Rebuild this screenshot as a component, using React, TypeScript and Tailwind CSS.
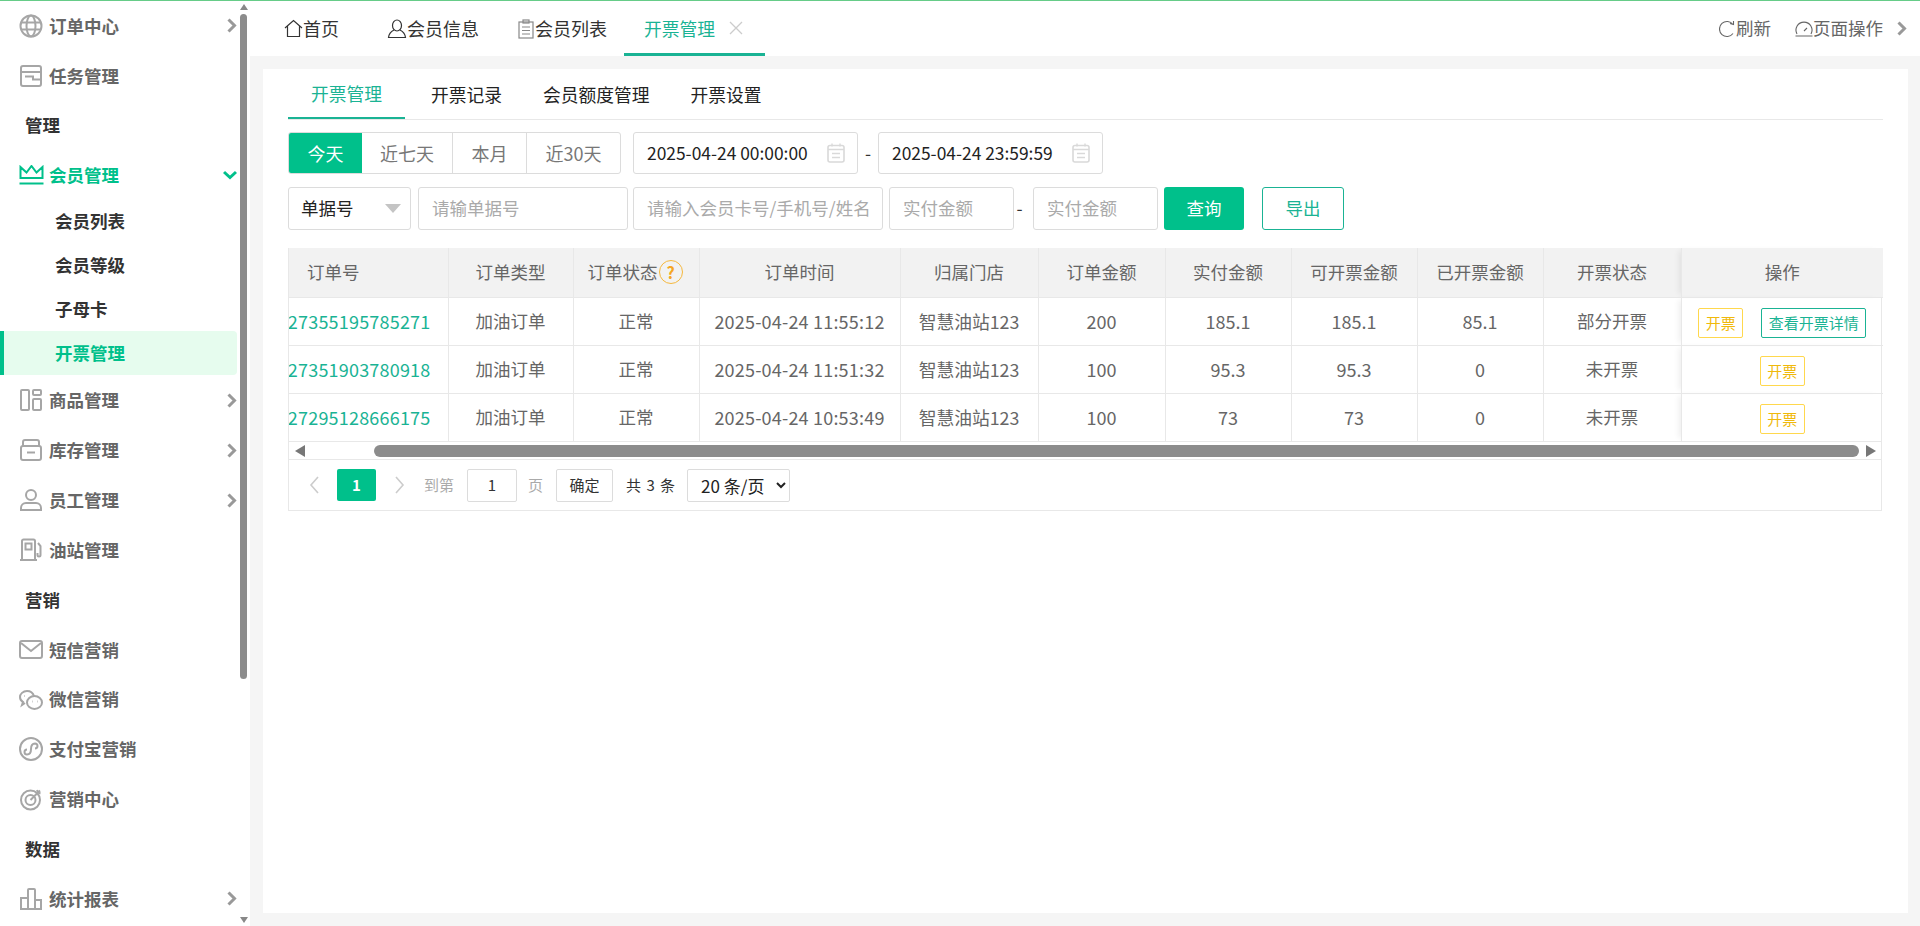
// App.tsx
import type { ReactNode } from 'react';

const ICON_GRAY = '#a6a6a6';

const Chevron = () => (
  <svg width="10" height="15" viewBox="0 0 10 15" fill="none" stroke="#999" strokeWidth="3">
    <path d="M1.500 1.500 7.500 7.500 1.500 13.500" />
  </svg>
);

const sideIcons: Record<string, ReactNode> = {
  globe: (
    <>
      <circle cx="12" cy="12" r="10.500" />
      <ellipse cx="12" cy="12" rx="4.500" ry="10.500" />
      <path d="M2 8.500h20M2 15.500h20" />
    </>
  ),
  task: (
    <>
      <rect x="2" y="2" width="20" height="20" rx="2" />
      <path d="M2 8h20M6 12.500h8v3h8" />
    </>
  ),
  goods: (
    <>
      <rect x="2" y="2" width="8" height="20" rx="1" />
      <rect x="14" y="2" width="8" height="5" rx="1" />
      <rect x="14" y="11" width="8" height="11" rx="1" />
    </>
  ),
  box: (
    <>
      <path d="M4 8V4a2 2 0 0 1 2-2h12a2 2 0 0 1 2 2v4" />
      <rect x="2" y="8" width="20" height="14" rx="2" />
      <path d="M8 14.500h8" />
    </>
  ),
  user: (
    <>
      <circle cx="12" cy="7" r="5" />
      <path d="M2 22v-2a5 5 0 0 1 5-5h10a5 5 0 0 1 5 5v2z" />
    </>
  ),
  station: (
    <>
      <path d="M3 22V3a1.500 1.500 0 0 1 1.500-1.500h10A1.500 1.500 0 0 1 16 3v19M1 22h17" />
      <rect x="6.500" y="5.500" width="6" height="6" />
      <path d="M19 5l2.500 3v9a1.500 1.500 0 0 1-3 0v-2" />
    </>
  ),
  mail: (
    <>
      <rect x="1" y="3" width="22" height="17" rx="2" />
      <path d="M2 5l10 8 10-8" />
    </>
  ),
  wechat: (
    <>
      <path d="M15 8c-1-3-4-5-7-5-4 0-7 3-7 6 0 2 1 4 3 5l-1 3 3-2" />
      <ellipse cx="15.500" cy="14.500" rx="7.500" ry="6.500" />
      <path d="M13 13.500h.5M18 13.500h.5M5.500 8h.5" />
    </>
  ),
  alipay: (
    <>
      <circle cx="12" cy="12" r="11" />
      <path d="M16 6.500c-3 0-4 2-4 5.500s-1 5.500-4 5.500a2.500 2.500 0 0 1 0-5M16 6.500a2.500 2.500 0 0 1 0 5" />
    </>
  ),
  target: (
    <>
      <circle cx="11.500" cy="13" r="9.500" />
      <circle cx="11.500" cy="13" r="5" />
      <path d="M11.500 13 21 3.500M18 3l1 2.500 2.500 1" />
    </>
  ),
  chart: (
    <>
      <rect x="2" y="11" width="7" height="11" />
      <rect x="9" y="2" width="7" height="20" rx="1" />
      <rect x="16" y="13" width="6" height="9" />
    </>
  ),
};

const SideItem = ({ icon, label, arrow }: { icon: string; label: string; arrow?: boolean }) => (
  <div className="flex h-[49.85px] items-center pl-[19px] pr-[3px] text-[17.5px] font-bold text-[#666]">
    <svg width="24" height="24" viewBox="0 0 24 24" fill="none" stroke={ICON_GRAY} strokeWidth="2" className="shrink-0">
      {sideIcons[icon]}
    </svg>
    <span className="ml-[6px] flex-1">{label}</span>
    {arrow && <Chevron />}
  </div>
);

const SideHeading = ({ label }: { label: string }) => (
  <div className="flex h-[49.85px] items-center pl-[25px] text-[17.5px] font-bold text-[#333]">{label}</div>
);

const Sidebar = () => (
  <aside className="flex w-[250px] shrink-0 bg-white">
    <div className="w-[240px] shrink-0 overflow-hidden">
      <SideItem icon="globe" label="订单中心" arrow />
      <SideItem icon="task" label="任务管理" />
      <SideHeading label="管理" />
      <div className="flex h-[49.85px] items-center pl-[19px] pr-[3px] text-[17.5px] font-bold text-[#00c08b]">
        <svg width="25" height="20" viewBox="0 0 25 20" fill="none" stroke="#00c08b" strokeWidth="2" className="shrink-0">
          <path d="M1.500 2v11h22V2l-6 5.500L12.500 1 7.500 7.500z" />
          <path d="M0.500 18.500h24" />
        </svg>
        <span className="ml-[5px] flex-1">会员管理</span>
        <svg width="14" height="10" viewBox="0 0 14 10" fill="none" stroke="#00c08b" strokeWidth="3">
          <path d="M1 2l6 5.500L13 2" />
        </svg>
      </div>
      <div className="-mt-[1px] text-[17.5px] font-bold text-[#333]">
        <div className="flex h-[43.8px] items-center pl-[55px]">会员列表</div>
        <div className="flex h-[43.8px] items-center pl-[55px]">会员等级</div>
        <div className="flex h-[43.8px] items-center pl-[55px]">子母卡</div>
        <div className="flex h-[43.8px] w-[237px] items-center rounded-r-[4px] border-l-4 border-[#00c08b] bg-[#e6fcee] pl-[51px] text-[#00c08b]">
          开票管理
        </div>
      </div>
      <div className="h-[1px]" />
      <SideItem icon="goods" label="商品管理" arrow />
      <SideItem icon="box" label="库存管理" arrow />
      <SideItem icon="user" label="员工管理" arrow />
      <SideItem icon="station" label="油站管理" />
      <SideHeading label="营销" />
      <SideItem icon="mail" label="短信营销" />
      <SideItem icon="wechat" label="微信营销" />
      <SideItem icon="alipay" label="支付宝营销" />
      <SideItem icon="target" label="营销中心" />
      <SideHeading label="数据" />
      <SideItem icon="chart" label="统计报表" arrow />
    </div>
    <div className="flex w-[7px] shrink-0 flex-col items-center justify-between py-[3px]">
      <svg width="8" height="6" viewBox="0 0 8 6" fill="#888"><path d="M4 0l4 6H0z" /></svg>
      <div className="mb-auto mt-[4px] h-[665px] w-[7px] rounded-full bg-[#8c8c8c]" />
      <svg width="8" height="6" viewBox="0 0 8 6" fill="#888"><path d="M4 6l4-6H0z" /></svg>
    </div>
  </aside>
);

const TopTab = ({ icon, label }: { icon: ReactNode; label: string }) => (
  <div className="flex items-center text-[18px] text-[#333]">
    {icon}
    <span>{label}</span>
  </div>
);

const TopBar = () => (
  <header className="flex h-[55px] shrink-0 items-center bg-white pl-[34px] pr-[13px]">
    <TopTab
      label="首页"
      icon={
        <svg width="19" height="19" viewBox="0 0 19 19" fill="none" stroke="#333" strokeWidth="1.200">
          <path d="M1 9 9.500 1.500 18 9M3.500 7v10.500h12V7" />
        </svg>
      }
    />
    <div className="ml-[48px]">
      <TopTab
        label="会员信息"
        icon={
          <svg width="20" height="20" viewBox="0 0 20 20" fill="none" stroke="#333" strokeWidth="1.200">
            <ellipse cx="10" cy="6.500" rx="4.500" ry="5.500" />
            <path d="M7 11c-2 1-5 3-5.500 7.500h17C18 14 15 12 13 11" />
          </svg>
        }
      />
    </div>
    <div className="ml-[38px]">
      <TopTab
        label="会员列表"
        icon={
          <svg width="18" height="20" viewBox="0 0 18 20" fill="none" stroke="#888" strokeWidth="1.200">
            <rect x="2" y="3" width="14" height="16" />
            <rect x="6" y="1" width="6" height="3" />
            <path d="M5 8h8M5 11.500h8M5 15h8" />
          </svg>
        }
      />
    </div>
    <div className="ml-[17px] flex h-[55px] w-[141px] items-center border-b-[3px] border-[#1ab394] pl-[20px] pt-[2px] text-[17.75px] text-[#1ab394]">
      <span>开票管理</span>
      <svg width="14" height="14" viewBox="0 0 14 14" fill="none" stroke="#ccc" strokeWidth="1.300" className="ml-[14px]">
        <path d="M1 1l12 12M13 1 1 13" />
      </svg>
    </div>
    <div className="ml-auto flex items-center text-[17.5px] text-[#666]">
      <svg width="17" height="18" viewBox="0 0 17 18" fill="none" stroke="#666" strokeWidth="1.100">
        <path d="M14 4.500A7.500 7.500 0 1 0 14 13.500M11 3.500l3.500 1V1" />
      </svg>
      <span>刷新</span>
      <svg width="18" height="16" viewBox="0 0 18 16" fill="none" stroke="#666" strokeWidth="1.100" className="ml-[24px]">
        <path d="M2 13a8 8 0 1 1 14 0M0.500 15h17M9 10l3-3" />
      </svg>
      <span>页面操作</span>
      <span className="ml-[14px]"><Chevron /></span>
    </div>
  </header>
);

const CalendarIcon = () => (
  <svg width="18" height="20" viewBox="0 0 18 20" fill="none" stroke="#d9d9d9" strokeWidth="1.600" className="ml-auto">
    <rect x="1" y="2.500" width="16" height="16.500" rx="2" />
    <path d="M1 6.500h16M5 0.500v3M13 0.500v3M5 10.500h8M5 14.500h8" strokeWidth="1.400" />
  </svg>
);

const Field = ({ width, text }: { width: string; text: string }) => (
  <div className={`flex h-[43px] shrink-0 items-center whitespace-nowrap rounded-[3px] border border-[#dcdcdc] pl-[13px] text-[#aaa] ${width}`}>
    {text}
  </div>
);

const DateField = ({ value }: { value: string }) => (
  <div className="flex h-[42px] w-[225px] items-center rounded-[3px] border border-[#dcdcdc] pl-[13px] pr-[12px] text-[17.4px] text-[#222]">
    <span>{value}</span>
    <CalendarIcon />
  </div>
);

const Filters = () => (
  <>
    <div className="mt-[12px] flex items-center text-[17.5px]">
      <div className="flex h-[42px] w-[333px] overflow-hidden rounded-[3px] border border-[#dcdcdc] text-[18px] text-[#777]">
        <div className="flex w-[73px] items-center justify-center bg-[#00c08b] text-white">今天</div>
        <div className="flex w-[91px] items-center justify-center border-r border-[#dcdcdc]">近七天</div>
        <div className="flex w-[74px] items-center justify-center border-r border-[#dcdcdc]">本月</div>
        <div className="flex flex-1 items-center justify-center">近30天</div>
      </div>
      <div className="ml-[12px]"><DateField value="2025-04-24 00:00:00" /></div>
      <span className="w-[20px] text-center text-[#333]">-</span>
      <DateField value="2025-04-24 23:59:59" />
    </div>
    <div className="mt-[13px] flex items-center text-[17.5px]">
      <div className="flex h-[43px] w-[123px] shrink-0 items-center rounded-[3px] border border-[#dcdcdc] px-[12px] text-[#222]">
        单据号
        <svg width="16" height="9" viewBox="0 0 16 9" fill="#c4c4c4" className="ml-auto mr-[-3px]"><path d="M0 0h16L8 9z" /></svg>
      </div>
      <div className="ml-[7px]"><Field width="w-[210px]" text="请输单据号" /></div>
      <div className="ml-[5px]"><Field width="w-[250px]" text="请输入会员卡号/手机号/姓名" /></div>
      <div className="ml-[6px]"><Field width="w-[125px]" text="实付金额" /></div>
      <span className="w-[19px] pr-[8px] text-center text-[#333]">-</span>
      <Field width="w-[125px]" text="实付金额" />
      <div className="ml-[6px] flex h-[43px] w-[80px] items-center justify-center rounded-[3px] bg-[#00c08b] text-white">查询</div>
      <div className="ml-[18px] flex h-[43px] w-[82px] items-center justify-center rounded-[3px] border border-[#1ab394] text-[#1ab394]">导出</div>
    </div>
  </>
);

const rows = [
  { no: '27355195785271', time: '2025-04-24 11:55:12', amount: '200', paid: '185.1', open: '185.1', done: '85.1', state: '部分开票', detail: true },
  { no: '27351903780918', time: '2025-04-24 11:51:32', amount: '100', paid: '95.3', open: '95.3', done: '0', state: '未开票', detail: false },
  { no: '27295128666175', time: '2025-04-24 10:53:49', amount: '100', paid: '73', open: '73', done: '0', state: '未开票', detail: false },
];

const th = 'border-r border-[#e8e8e8] font-normal';
const td = 'border-r border-t border-[#e8e8e8] p-0 text-center';
const fixedShadow = 'shadow-[-5px_0_6px_-3px_rgba(0,0,0,0.07)]';

const OrderTable = () => (
  <table className="w-[1594px] table-fixed border-collapse text-[17.5px] text-[#666]">
    <colgroup>
      <col className="w-[159px]" />
      <col className="w-[125px]" />
      <col className="w-[126px]" />
      <col className="w-[201px]" />
      <col className="w-[138px]" />
      <col className="w-[127px]" />
      <col className="w-[126px]" />
      <col className="w-[126px]" />
      <col className="w-[126px]" />
      <col className="w-[138px]" />
      <col className="w-[202px]" />
    </colgroup>
    <thead>
      <tr className="h-[49px] bg-[#f2f2f2]">
        <th className={`${th} pl-[18px] text-left`}>订单号</th>
        <th className={th}>订单类型</th>
        <th className={th}>
          <div className="-ml-[2px] flex items-center justify-center">
            订单状态
            <span className="ml-[1px] flex h-[24px] w-[24px] items-center justify-center rounded-full border border-[#f5b83d] text-[16px] font-bold text-[#f5a623]">?</span>
          </div>
        </th>
        <th className={th}>订单时间</th>
        <th className={th}>归属门店</th>
        <th className={th}>订单金额</th>
        <th className={th}>实付金额</th>
        <th className={th}>可开票金额</th>
        <th className={th}>已开票金额</th>
        <th className={`${th} border-r-0`}>开票状态</th>
        <th className={`border-l border-[#e8e8e8] font-normal ${fixedShadow}`}>操作</th>
      </tr>
    </thead>
    <tbody>
      {rows.map(row => (
        <tr key={row.no} className="h-[48px]">
          <td className={td}>
            <div className="flex justify-end overflow-hidden whitespace-nowrap pr-[17px] text-[18px] tracking-[0.2px] text-[#1ab394]">{row.no}</div>
          </td>
          <td className={td}>加油订单</td>
          <td className={td}>正常</td>
          <td className={`${td} text-[18px] tracking-[0.2px]`}>{row.time}</td>
          <td className={`${td} text-[17.8px]`}>智慧油站123</td>
          <td className={`${td} text-[18px]`}>{row.amount}</td>
          <td className={`${td} text-[18px]`}>{row.paid}</td>
          <td className={`${td} text-[18px]`}>{row.open}</td>
          <td className={`${td} text-[18px]`}>{row.done}</td>
          <td className={`${td} border-r-0`}>{row.state}</td>
          <td className={`border-l border-t border-[#e8e8e8] p-0 ${fixedShadow}`}>
            <div className="flex items-center justify-center gap-[18px] pt-[4px] text-[15px]">
              <span className="flex h-[30px] w-[45px] items-center justify-center rounded-[2px] border border-[#ffd84d] text-[#f0b90b]">开票</span>
              {row.detail && (
                <span className="flex h-[30px] w-[105px] items-center justify-center rounded-[2px] border border-[#1ab394] text-[#1ab394]">查看开票详情</span>
              )}
            </div>
          </td>
        </tr>
      ))}
    </tbody>
  </table>
);

const TableScrollbar = () => (
  <div className="flex h-[19px] items-center border-y border-[#e8e8e8] pl-[6px] pr-[5px]">
    <svg width="10" height="12" viewBox="0 0 10 12" fill="#777"><path d="M0 6l10-6v12z" /></svg>
    <div className="ml-[69px] h-[12px] flex-1 rounded-full bg-[#8c8c8c]" />
    <svg width="10" height="12" viewBox="0 0 10 12" fill="#777" className="ml-[7px]"><path d="M10 6 0 0v12z" /></svg>
  </div>
);

const Pagination = () => (
  <div className="flex h-[50px] items-center pl-[19px] text-[15px]">
    <svg width="14" height="20" viewBox="0 0 14 20" fill="none" stroke="#ccc" strokeWidth="1.600"><path d="M10 2 3 10l7 8" /></svg>
    <div className="ml-[15px] flex h-[32px] w-[39px] items-center justify-center rounded-[2px] bg-[#00c08b] font-bold text-white">1</div>
    <svg width="14" height="20" viewBox="0 0 14 20" fill="none" stroke="#ccc" strokeWidth="1.600" className="ml-[16px]"><path d="M4 2l7 8-7 8" /></svg>
    <span className="ml-[18px] text-[#aaa]">到第</span>
    <div className="ml-[13px] flex h-[33px] w-[50px] items-center justify-center rounded-[2px] border border-[#dcdcdc] text-[#333]">1</div>
    <span className="ml-[11px] text-[#aaa]">页</span>
    <div className="ml-[13px] flex h-[33px] w-[57px] items-center justify-center rounded-[2px] border border-[#dcdcdc] text-[#333]">确定</div>
    <span className="ml-[13px] text-[#333] [word-spacing:2px]">共 3 条</span>
    <select defaultValue="20" className="ml-[12px] h-[33px] w-[103px] rounded-[2px] border border-[#dcdcdc] bg-white pl-[9px] text-[17px] text-[#222]">
      <option value="20">20 条/页</option>
    </select>
  </div>
);

export default function App() {
  return (
    <div className="flex h-[926px] w-[1920px] flex-col overflow-hidden bg-white font-['Noto_Sans_CJK_SC',sans-serif]">
      <div className="h-[1px] shrink-0 bg-[#66cc88]" />
      <div className="flex min-h-0 flex-1">
        <Sidebar />
        <div className="flex min-w-0 flex-1 flex-col bg-[#f5f5f5]">
          <TopBar />
          <main className="mb-[13px] ml-[13px] mr-[12px] mt-[13px] flex-1 bg-white px-[25px]">
            <nav className="flex h-[51px] border-b border-[#e8e8e8] text-[17.75px] text-[#222]">
              <div className="flex w-[117px] items-center justify-center border-b-[2px] border-[#1ab394] text-[#1ab394]">开票管理</div>
              <div className="ml-[26px] flex items-center">开票记录</div>
              <div className="ml-[41px] flex items-center">会员额度管理</div>
              <div className="ml-[41px] flex items-center">开票设置</div>
            </nav>
            <Filters />
            <div className="mt-[18px] w-[1594px] border border-t-0 border-[#e8e8e8]">
              <OrderTable />
              <TableScrollbar />
              <Pagination />
            </div>
          </main>
        </div>
      </div>
    </div>
  );
}
